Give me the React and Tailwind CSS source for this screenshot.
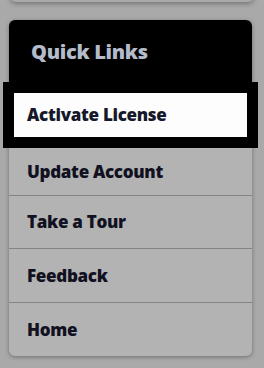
export default function App() {
  const links = [
    { label: 'Update Account', h: 'h-[48px]' },
    { label: 'Take a Tour', h: 'h-[53px]' },
    { label: 'Feedback', h: 'h-[54px]' },
    { label: 'Home', h: 'h-[53px]' },
  ]

  return (
    <div className="w-[264px] h-[368px] bg-[#a9a9a9] overflow-hidden relative" style={{ fontFamily: '"Open Sans", "Noto Sans", sans-serif' }}>
      <div className="absolute left-[10px] right-[10px] -top-[12px] h-[14px] rounded-b-md bg-[#a9a9a9] shadow-[0_2px_5px_rgba(0,0,0,0.3)]" />
      <div className="pt-[20px] px-[9px]">
        <div className="w-[243px] rounded-md bg-[#b3b3b3] shadow-[0_1px_4px_rgba(0,0,0,0.35)]">
          <div className="h-[62px] bg-black rounded-t-md flex items-center pl-[22px] pt-[2px]">
            <h2 className="text-[20px] font-extrabold text-[#b4bccb] tracking-[-0.3px]">Quick Links</h2>
          </div>
          <div className="-mx-[6px] bg-black p-[11px]">
            <div className="h-[44px] bg-[#fdfdfd] flex items-center pl-[13px]">
              <span className="text-[17px] font-extrabold text-[#15182a] tracking-[-0.3px]">Activate License</span>
            </div>
          </div>
          {links.map((link, i) => (
            <div
              key={link.label}
              className={`${link.h} flex items-center pl-[18px] ${i < links.length - 1 ? 'border-b border-[#858585]' : ''}`}
            >
              <span className="text-[17px] font-extrabold text-[#111122] tracking-[-0.3px]">{link.label}</span>
            </div>
          ))}
        </div>
      </div>
    </div>
  )
}
